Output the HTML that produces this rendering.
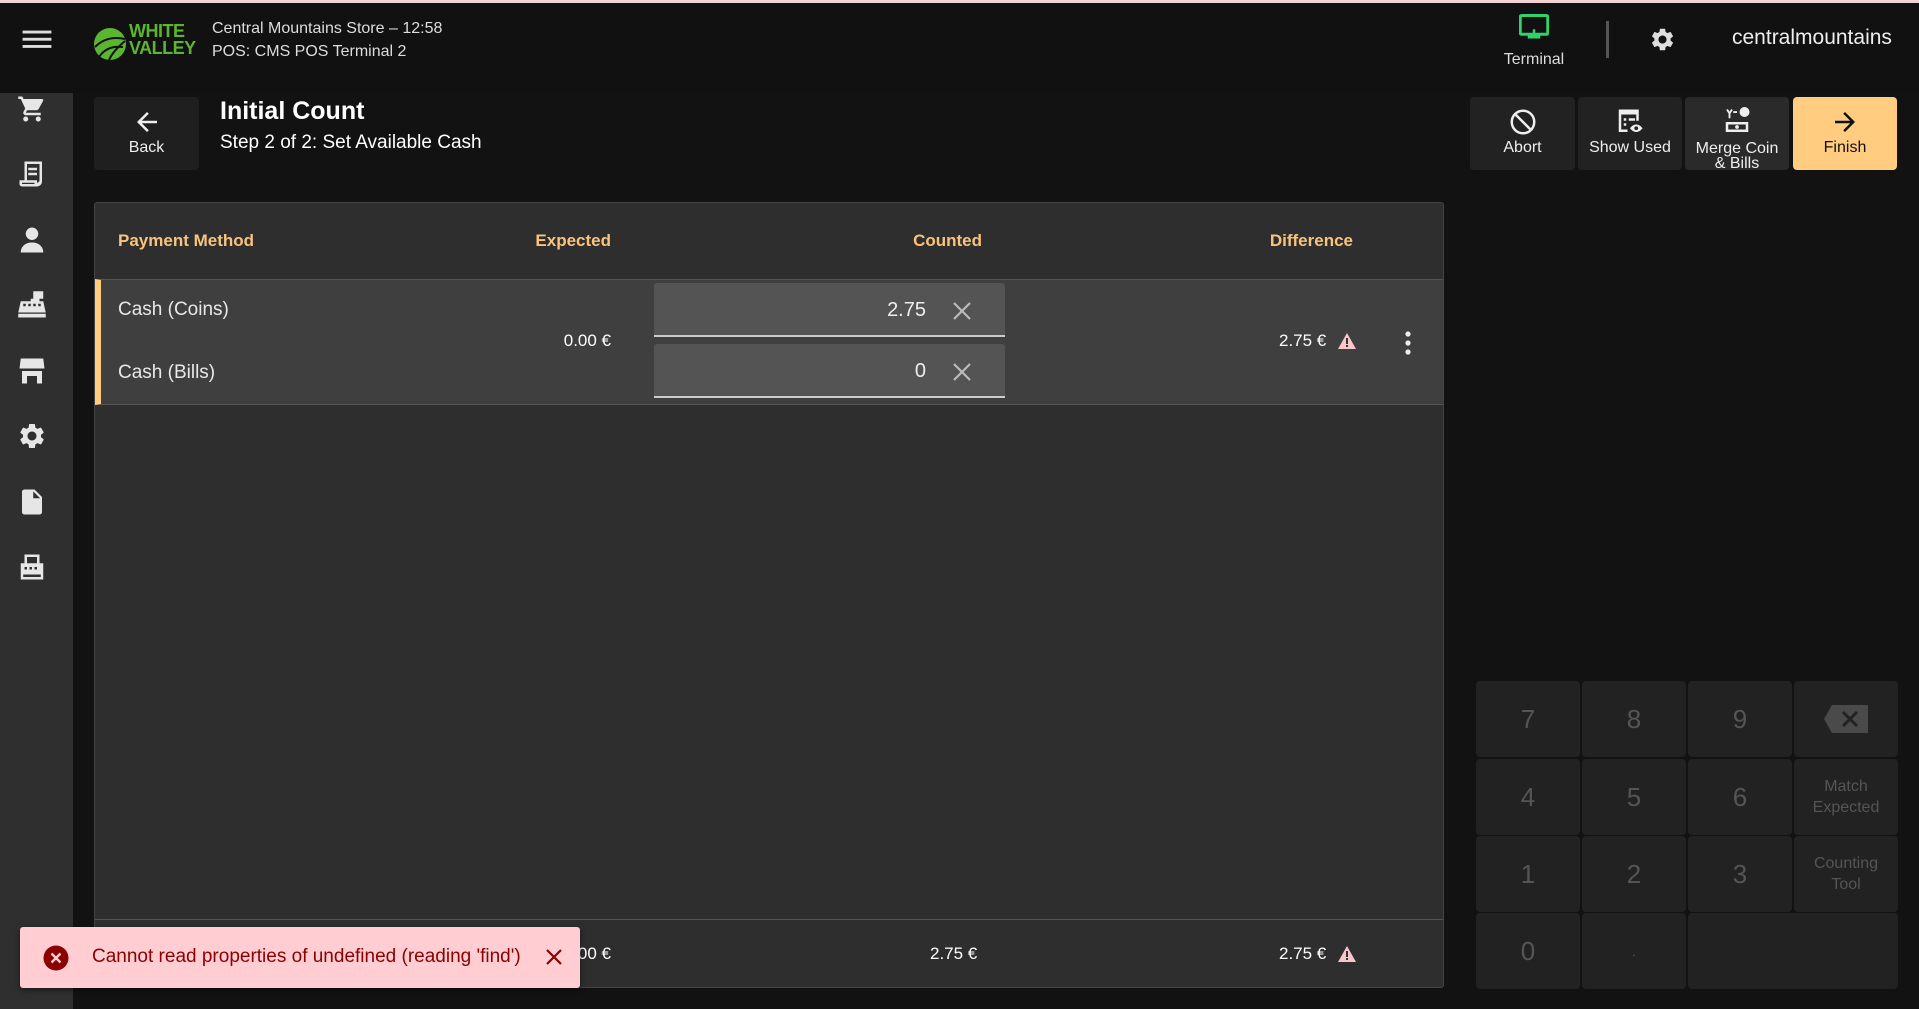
<!DOCTYPE html>
<html><head><meta charset="utf-8"><style>
*{box-sizing:border-box;margin:0;padding:0}
body{width:1919px;height:1009px;background:#121212;font-family:"Liberation Sans",sans-serif;color:#fff;position:relative;overflow:hidden}
.abs{position:absolute}
.top{left:0;top:0;width:1919px;height:93px;background:#111;border-top:3px solid #f4d3d6}
.side{left:0;top:93px;width:73px;height:916px;background:#2f2f2f}
.side svg{position:absolute;left:17px;width:30px;height:30px;fill:#e6e6e6}
.btn{background:#222;border-radius:4px;text-align:center;color:#eee;font-size:16px}
.btn svg{display:block;margin:10px auto 2px;width:30px;height:30px;fill:#eee}
.card{left:94px;top:202px;width:1350px;height:786px;background:#2e2e2e;border:1px solid #444;border-radius:3px}
.hd{color:#f9c37d;font-weight:bold;font-size:17px}
.k{background:#222;border-radius:4px;color:#555;font-size:26px;display:flex;align-items:center;justify-content:center;text-align:center;width:104px;height:76px}
.k.s{font-size:16px;line-height:21px}
</style></head><body>
<div class="abs top"></div>
<svg class="abs" style="left:22px;top:27px" width="30" height="24" viewBox="0 0 24 20"><rect y="3" width="24" height="2.4" fill="#ddd"/><rect y="9" width="24" height="2.4" fill="#ddd"/><rect y="15" width="24" height="2.4" fill="#ddd"/></svg>
<svg class="abs" style="left:93px;top:27px" width="34" height="34" viewBox="0 0 34 34"><circle cx="17" cy="17" r="16" fill="#5cb531"/><path d="M2 20 Q14 8 32 12 M6 30 Q14 18 30 20 M16 33 Q20 24 32 14" stroke="#111" stroke-width="2" fill="none"/></svg>
<div class="abs" style="left:129px;top:23px;color:#5cb531;font-weight:bold;font-size:18px;line-height:17px;letter-spacing:-0.5px">WHITE<br>VALLEY</div>
<div class="abs" style="left:212px;top:17px;font-size:16px;line-height:23px;color:#ddd">Central Mountains Store – 12:58<br>POS: CMS POS Terminal 2</div>
<svg class="abs" style="left:1519px;top:14px" width="30" height="28" viewBox="0 0 24 22"><path d="M2 1h20a1 1 0 0 1 1 1v13a1 1 0 0 1-1 1H2a1 1 0 0 1-1-1V2a1 1 0 0 1 1-1z" fill="none" stroke="#2ed36a" stroke-width="2.4"/><rect x="11" y="12" width="2" height="4" fill="#2ed36a"/><rect x="7" y="17" width="10" height="2.4" fill="#2ed36a"/></svg>
<div class="abs" style="left:1490px;top:51px;width:88px;text-align:center;font-size:16px;color:#ddd">Terminal</div>
<div class="abs" style="left:1606px;top:21px;width:3px;height:37px;background:#555"></div>
<svg class="abs" style="left:1649px;top:26px" width="27" height="27" viewBox="0 0 24 24"><path fill="#ddd" d="M19.14 12.94c.04-.3.06-.61.06-.94 0-.32-.02-.64-.07-.94l2.030-1.58a.49.49 0 0 0 .12-.61l-1.92-3.32a.488.488 0 0 0-.59-.22l-2.39.96c-.5-.38-1.03-.7-1.62-.94l-.36-2.54a.484.484 0 0 0-.48-.41h-3.84c-.24 0-.43.17-.47.41l-.36 2.54c-.59.24-1.13.57-1.62.94l-2.39-.96c-.22-.08-.47 0-.59.22L2.74 8.87c-.12.21-.08.47.12.61l2.03 1.58c-.05.3-.09.63-.09.94s.02.64.07.94l-2.03 1.58a.49.49 0 0 0-.12.61l1.92 3.32c.12.22.37.29.59.22l2.39-.96c.5.38 1.03.7 1.62.94l.36 2.54c.05.24.24.41.48.41h3.84c.24 0 .44-.17.47-.41l.36-2.54c.59-.24 1.13-.56 1.62-.94l2.39.96c.22.08.47 0 .59-.22l1.92-3.32c.12-.22.07-.47-.12-.61l-2.01-1.58zM12 15.6c-1.98 0-3.6-1.62-3.6-3.6s1.62-3.6 3.6-3.6 3.6 1.62 3.6 3.6-1.62 3.6-3.6 3.6z"/></svg>
<div class="abs" style="left:1732px;top:26px;font-size:21px;color:#eee">centralmountains</div>

<div class="abs side">
<svg style="top:1px" viewBox="0 0 24 24"><path d="M7 18c-1.1 0-2 .9-2 2s.9 2 2 2 2-.9 2-2-.9-2-2-2zM1 2v2h2l3.6 7.59-1.35 2.450c-.16.28-.25.61-.25.96 0 1.1.9 2 2 2h12v-2H7.42c-.14 0-.25-.11-.25-.25l.03-.12.9-1.63h7.45c.75 0 1.41-.41 1.75-1.03l3.58-6.490A1 1 0 0 0 20 4H5.21l-.94-2H1zm16 16c-1.1 0-2 .9-2 2s.9 2 2 2 2-.9 2-2-.9-2-2-2z"/></svg>
<svg style="top:66px" viewBox="0 0 24 24"><path d="M6 2h14v16a4 4 0 0 1-4 4H4a2 2 0 0 1-2-2v-3h4zM8 4v13h8v2a2 2 0 0 0 2-2V4zm1 3h7v2H9zm0 4h7v2H9zM4 19v1h10v-1z"/></svg>
<svg style="top:132px" viewBox="0 0 24 24"><circle cx="12" cy="7" r="5"/><path d="M3 22c0-5 4-8 9-8s9 3 9 8z"/></svg>
<svg style="top:197px" viewBox="0 0 24 24"><path d="M13 1h8v6h-3v2h3l2 9H1l2-9h8V7h2zM5 11v2h2v-2zm4 0v2h2v-2zm4 0v2h2v-2zm4 0v2h2v-2zM1 19h22v3H1z"/></svg>
<svg style="top:263px" viewBox="0 0 24 24"><path d="M3 2h18l1 8H2zM4 12h16v10h-4v-6H8v6H4z"/></svg>
<svg style="top:328px" viewBox="0 0 24 24"><path d="M19.14 12.94c.04-.3.06-.61.06-.94 0-.32-.02-.64-.07-.94l2.03-1.58a.49.49 0 0 0 .12-.61l-1.92-3.32a.488.488 0 0 0-.59-.22l-2.39.96c-.5-.38-1.03-.7-1.62-.94l-.36-2.54a.484.484 0 0 0-.48-.41h-3.84c-.24 0-.43.17-.47.41l-.36 2.54c-.59.24-1.13.57-1.62.94l-2.39-.96c-.22-.08-.47 0-.59.22L2.74 8.87c-.12.21-.08.47.12.61l2.03 1.58c-.05.3-.09.63-.09.94s.02.64.07.94l-2.03 1.58a.49.49 0 0 0-.12.61l1.92 3.32c.12.22.37.29.59.22l2.39-.96c.5.38 1.03.7 1.62.94l.36 2.54c.05.24.24.41.48.41h3.84c.24 0 .44-.17.47-.41l.36-2.54c.59-.24 1.13-.56 1.62-.94l2.39.96c.22.08.47 0 .59-.22l1.92-3.32c.12-.22.07-.47-.12-.61l-2.01-1.58zM12 15.6c-1.98 0-3.6-1.62-3.6-3.6s1.62-3.6 3.6-3.6 3.6 1.62 3.6 3.6-1.62 3.6-3.6 3.6z"/></svg>
<svg style="top:394px" viewBox="0 0 24 24"><path d="M14 2H6c-1.1 0-2 .9-2 2v16c0 1.1.9 2 2 2h12c1.1 0 2-.9 2-2V8l-6-6zm-1 7V3.5L18.5 9H13z"/></svg>
<svg style="top:459px" viewBox="0 0 24 24"><path d="M6 2h12v7h3v13H3V9h3zm2 2v5h8V4zM6 12v2h2v-2zm4 0v2h2v-2zm4 0v2h2v-2zM5 18v2h14v-2z"/></svg>
</div>

<div class="abs btn" style="left:94px;top:97px;width:105px;height:73px;background:#1f1f1f"><svg viewBox="0 0 24 24"><path d="M20 11H7.83l5.59-5.59L12 4l-8 8 8 8 1.41-1.41L7.83 13H20v-2z"/></svg>Back</div>
<div class="abs" style="left:220px;top:97px;font-size:25px;font-weight:bold">Initial Count</div>
<div class="abs" style="left:220px;top:132px;font-size:19px">Step 2 of 2: Set Available Cash</div>

<div class="abs btn" style="left:1470px;top:97px;width:105px;height:73px"><svg viewBox="0 0 24 24"><circle cx="12" cy="12" r="9" fill="none" stroke="#eee" stroke-width="2"/><path d="M5.6 5.6l12.8 12.8" stroke="#eee" stroke-width="2"/></svg>Abort</div>
<div class="abs btn" style="left:1578px;top:97px;width:104px;height:73px"><svg viewBox="0 0 24 24"><path d="M3 2h16v9h-2V6H5v12h5v2H3zM7 9h2v2H7zm4 0h5v2h-5zm-4 4h2v2H7z"/><path d="M17 14c-3 0-5 3-5 3s2 3 5 3 5-3 5-3-2-3-5-3zm0 4.5a1.5 1.5 0 1 1 0-3 1.5 1.5 0 0 1 0 3z"/></svg>Show Used</div>
<div class="abs btn" style="left:1685px;top:97px;width:104px;height:73px;background:#2a2a2a;line-height:15px"><svg viewBox="0 0 24 24" style="margin-bottom:4px"><path d="M4 2l2 3 2-3M6 5v4M9 4h3" stroke="#eee" stroke-width="1.5" fill="none"/><circle cx="18" cy="4" r="4"/><path d="M3 12h18v8H3zm2 2v4h14v-4zm7 .5a1.5 1.5 0 1 0 0 3 1.5 1.5 0 0 0 0-3z"/></svg>Merge Coin<br>&amp; Bills</div>
<div class="abs btn" style="left:1793px;top:97px;width:104px;height:73px;background:#ffcc80;color:#111"><svg viewBox="0 0 24 24" style="fill:#111"><path d="M12 4l-1.41 1.41L16.17 11H4v2h12.17l-5.58 5.59L12 20l8-8z"/></svg>Finish</div>

<div class="abs card">
 <div class="abs hd" style="left:23px;top:28px">Payment Method</div>
 <div class="abs hd" style="left:400px;top:28px;width:116px;text-align:right">Expected</div>
 <div class="abs hd" style="left:800px;top:28px;width:87px;text-align:right">Counted</div>
 <div class="abs hd" style="left:1150px;top:28px;width:108px;text-align:right">Difference</div>
 <div class="abs" style="left:0;top:76px;width:1348px;height:126px;background:#3f3f3f;border-top:1px solid #555;border-bottom:1px solid #555;border-left:6px solid #ffcc80"></div>
 <div class="abs" style="left:23px;top:96px;font-size:19px;color:#e8e8e8">Cash (Coins)</div>
 <div class="abs" style="left:23px;top:159px;font-size:19px;color:#e8e8e8">Cash (Bills)</div>
 <div class="abs" style="left:400px;top:128px;width:116px;text-align:right;font-size:17px">0.00 €</div>
 <div class="abs" style="left:559px;top:80px;width:351px;height:54px;background:#545454;border-bottom:2px solid #ccc;border-radius:3px 3px 0 0"></div>
 <div class="abs" style="left:559px;top:141px;width:351px;height:54px;background:#545454;border-bottom:2px solid #ccc;border-radius:3px 3px 0 0"></div>
 <div class="abs" style="left:700px;top:96px;width:131px;text-align:right;font-size:20px;color:#eee">2.75</div>
 <div class="abs" style="left:700px;top:157px;width:131px;text-align:right;font-size:20px;color:#eee">0</div>
 <svg class="abs" style="left:857px;top:98px" width="20" height="20" viewBox="0 0 20 20"><path d="M2 2l16 16M18 2L2 18" stroke="#bbb" stroke-width="2.2"/></svg>
 <svg class="abs" style="left:857px;top:159px" width="20" height="20" viewBox="0 0 20 20"><path d="M2 2l16 16M18 2L2 18" stroke="#bbb" stroke-width="2.2"/></svg>
 <div class="abs" style="left:1184px;top:128px;font-size:17px">2.75 €</div>
 <svg class="abs" style="left:1243px;top:130px" width="18" height="16" viewBox="0 0 18 16"><path d="M9 0L18 16H0z" fill="#f7c6cb"/><rect x="8" y="5" width="2" height="6" fill="#333"/><rect x="8" y="12" width="2" height="2" fill="#333"/></svg>
 <svg class="abs" style="left:1309px;top:128px" width="8" height="24" viewBox="0 0 8 24"><circle cx="4" cy="3" r="2.6" fill="#eee"/><circle cx="4" cy="12" r="2.6" fill="#eee"/><circle cx="4" cy="21" r="2.6" fill="#eee"/></svg>
 <div class="abs" style="left:0;top:716px;width:1348px;height:1px;background:#555"></div>
 <div class="abs" style="left:400px;top:741px;width:116px;text-align:right;font-size:17px">0.00 €</div>
 <div class="abs" style="left:835px;top:741px;font-size:17px">2.75 €</div>
 <div class="abs" style="left:1184px;top:741px;font-size:17px">2.75 €</div>
 <svg class="abs" style="left:1243px;top:743px" width="18" height="16" viewBox="0 0 18 16"><path d="M9 0L18 16H0z" fill="#f7c6cb"/><rect x="8" y="5" width="2" height="6" fill="#333"/><rect x="8" y="12" width="2" height="2" fill="#333"/></svg>
</div>

<div class="abs" style="left:20px;top:927px;width:560px;height:61px;background:#ffcdd2;border-radius:3px;box-shadow:0 2px 6px rgba(0,0,0,.5)"></div>
<svg class="abs" style="left:43px;top:945px" width="26" height="26" viewBox="0 0 26 26"><circle cx="13" cy="13" r="12.5" fill="#8b0000"/><path d="M8.5 8.5l9 9M17.5 8.5l-9 9" stroke="#ffcdd2" stroke-width="2.4"/></svg>
<div class="abs" style="left:92px;top:946px;font-size:19px;color:#8b0000">Cannot read properties of undefined (reading 'find')</div>
<svg class="abs" style="left:545px;top:948px" width="18" height="18" viewBox="0 0 18 18"><path d="M2 2l14 14M16 2L2 16" stroke="#8b0000" stroke-width="2.2"/></svg>

<div class="abs k" style="left:1476px;top:681px">7</div>
<div class="abs k" style="left:1582px;top:681px">8</div>
<div class="abs k" style="left:1688px;top:681px">9</div>
<div class="abs k" style="left:1794px;top:681px"><svg width="44" height="28" viewBox="0 0 44 28"><path d="M8 0h36v28H8L0 14z" fill="#4a4a4a"/><path d="M19 7l14 14M33 7L19 21" stroke="#222" stroke-width="3"/></svg></div>
<div class="abs k" style="left:1476px;top:759px">4</div>
<div class="abs k" style="left:1582px;top:759px">5</div>
<div class="abs k" style="left:1688px;top:759px">6</div>
<div class="abs k s" style="left:1794px;top:759px">Match<br>Expected</div>
<div class="abs k" style="left:1476px;top:836px">1</div>
<div class="abs k" style="left:1582px;top:836px">2</div>
<div class="abs k" style="left:1688px;top:836px">3</div>
<div class="abs k s" style="left:1794px;top:836px">Counting<br>Tool</div>
<div class="abs k" style="left:1476px;top:913px">0</div>
<div class="abs k" style="left:1582px;top:913px;font-size:14px">.</div>
<div class="abs k" style="left:1688px;top:913px;width:210px"></div>
</body></html>
